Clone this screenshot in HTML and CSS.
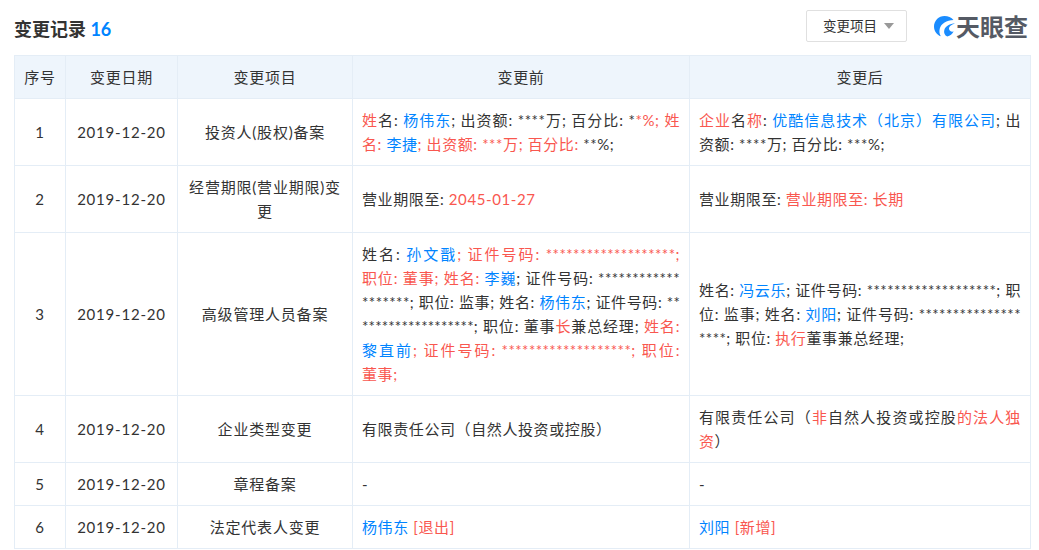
FILE: index.html
```html
<!DOCTYPE html>
<html lang="zh-CN">
<head>
<meta charset="utf-8">
<title>变更记录</title>
<link rel="stylesheet" href="styles.css">
</head>
<body>
<header class="top">
  <h2 class="title">变更记录 <span class="count">16</span></h2>
  <div class="tools">
    <button class="select">变更项目<i class="caret"></i></button>
    <div class="logo">
      <svg width="21" height="21" viewBox="0 0 21 21" aria-hidden="true">
        <path d="M19.500 4C17.500 1.500 14 0 10.500 0 4.700 0 0 4.700 0 10.500c0 4.500 2.800 8.300 6.800 9.800C5.500 18 5 15.500 5.800 12.500 7.300 7.500 12.500 4.300 19.500 4z" fill="#1a8cff"/>
        <path d="M21 7.500C16 7.500 11.500 10 10.300 14c-.7 2.700.3 5.300 3 6.600 2.800-.7 5-2.500 6.300-5-2.600.5-4.600-.8-4.600-3.100 0-2 2-3.600 6-5z" fill="#1a8cff"/>
      </svg>
      <span class="logo-text">天眼查</span>
    </div>
  </div>
</header>
<table class="log">
  <colgroup>
    <col class="c1"><col class="c2"><col class="c3"><col class="c4"><col class="c5">
  </colgroup>
  <thead>
    <tr><th>序号</th><th>变更日期</th><th>变更项目</th><th>变更前</th><th>变更后</th></tr>
  </thead>
  <tbody>
    <tr>
      <td class="mid">1</td><td class="mid">2019-12-20</td><td class="mid">投资人(股权)备案</td>
      <td><em>姓</em>名: <b>杨伟东</b>; 出资额: ****万; 百分比: *<em>*%; 姓名: </em><b>李捷</b><em>; 出资额: ***万; 百分比: </em>**%;</td>
      <td><em>企业</em>名<em>称</em>: <b>优酷信息技术（北京）有限公司</b>; 出资额: ****万; 百分比: ***%;</td>
    </tr>
    <tr>
      <td class="mid">2</td><td class="mid">2019-12-20</td><td class="mid">经营期限(营业期限)变更</td>
      <td>营业期限至: <em>2045-01-27</em></td>
      <td>营业期限至: <em>营业期限至: 长期</em></td>
    </tr>
    <tr>
      <td class="mid">3</td><td class="mid">2019-12-20</td><td class="mid">高级管理人员备案</td>
      <td>姓名: <b>孙文戬</b><em>; 证件号码: <span class="mask">*******************</span>; 职位: 董事; 姓名: </em><b>李巍</b>; 证件号码: <span class="mask">*******************</span>; 职位: 监事; 姓名: <b>杨伟东</b>; 证件号码: <span class="mask tight">*******************</span>; 职位: 董事<em>长</em>兼总经理; <em>姓名: </em><b>黎直前</b><em>; 证件号码: <span class="mask">*******************</span>; 职位: 董事;</em></td>
      <td>姓名: <b>冯云乐</b>; 证件号码: <span class="mask">*******************</span>; 职位: 监事; 姓名: <b>刘阳</b>; 证件号码: <span class="mask">*******************</span>; 职位: <em>执行</em>董事兼总经理;</td>
    </tr>
    <tr>
      <td class="mid">4</td><td class="mid">2019-12-20</td><td class="mid">企业类型变更</td>
      <td>有限责任公司（自然人投资或控股）</td>
      <td>有限责任公司（<em>非</em>自然人投资或控股<em>的法人独资</em>）</td>
    </tr>
    <tr>
      <td class="mid">5</td><td class="mid">2019-12-20</td><td class="mid">章程备案</td>
      <td>-</td><td>-</td>
    </tr>
    <tr>
      <td class="mid">6</td><td class="mid">2019-12-20</td><td class="mid">法定代表人变更</td>
      <td><b>杨伟东</b> <em>[退出]</em></td>
      <td><b>刘阳</b> <em>[新增]</em></td>
    </tr>
  </tbody>
</table>
</body>
</html>
```
FILE: styles.css
```css
* { box-sizing: border-box; }
html, body { margin: 0; padding: 0; background: #fff; }
body {
  width: 1039px;
  height: 550px;
  overflow: hidden;
  padding: 0 8px 0 14px;
  font-family: "Lato", "Noto Sans CJK SC", sans-serif;
  font-size: 15px;
  color: #333;
}
.top {
  height: 55px;
  display: flex;
  justify-content: space-between;
  align-items: flex-start;
}
.title {
  margin: 17px 0 0;
  font-size: 18px;
  line-height: 24px;
  font-weight: 700;
  color: #333;
}
.count { color: #0084ff; }
.tools { display: flex; align-items: flex-start; padding-right: 4px; }
.select {
  margin-top: 10px;
  width: 101px;
  height: 32px;
  padding: 0 0 2px 16px;
  display: flex;
  align-items: center;
  background: #fff;
  border: 1px solid #e0e0e0;
  border-radius: 2px;
  font: inherit;
  font-size: 13.5px;
  color: #333;
}
.caret {
  margin: 2px 0 0 7px;
  width: 0;
  height: 0;
  border-left: 5px solid transparent;
  border-right: 5px solid transparent;
  border-top: 6px solid #999;
}
.logo { margin: 15px -1px 0 27px; display: flex; align-items: center; height: 23px; }
.logo-text {
  margin-left: 1px;
  font-size: 24px;
  line-height: 23px;
  font-weight: 700;
  color: #555a64;
}
.log {
  width: 1016px;
  border-collapse: collapse;
  table-layout: fixed;
}
.c1 { width: 51px; }
.c2 { width: 112px; }
.c3 { width: 175px; }
.c4 { width: 337px; }
.c5 { width: 341px; }
th, td {
  border: 1px solid #e4edf6;
  padding: 9px;
  line-height: 24px;
  font-weight: 400;
  letter-spacing: 0.6px;
  word-break: break-all;
  text-align: justify;
}
th { background: #eef5fc; text-align: center; letter-spacing: 0.7px; }
td.mid { text-align: center; letter-spacing: 0.8px; }
.mask { letter-spacing: 0.45px; }
.tight { letter-spacing: 0.2px; }
em { font-style: normal; color: #f9574f; }
b { font-weight: 400; color: #0084ff; }
```
